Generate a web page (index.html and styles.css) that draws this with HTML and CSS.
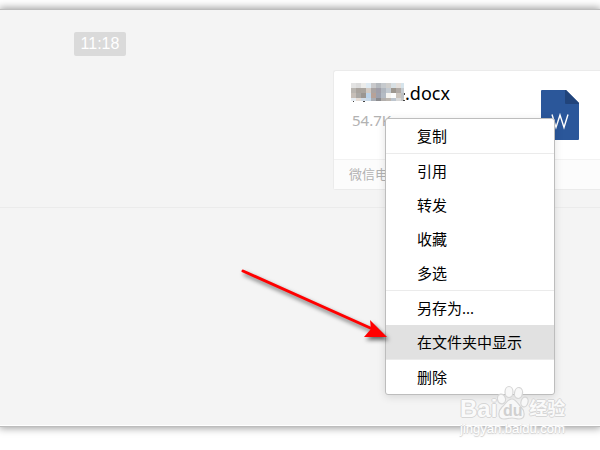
FILE: index.html
```
<!DOCTYPE html>
<html lang="zh-CN">
<head>
<meta charset="utf-8">
<title>聊天</title>
<link rel="stylesheet" href="styles.css">
</head>
<body>
<main class="window">
  <section class="messages">
    <time class="stamp">11:18</time>
    <article class="file-card">
      <div class="file-body">
        <div class="file-info">
          <h1 class="file-name">
            <svg class="mosaic" width="54" height="20" viewBox="0 0 54 20" shape-rendering="crispEdges" aria-hidden="true">
              <path fill="#e3e3e3" d="M0 0h5v5H0z"/><path fill="#dcdcdc" d="M5 0h5v5H5z"/><path fill="#ececea" d="M10 0h5v5h-5z"/><path fill="#dfeaf2" d="M15 0h5v5h-5z"/><path fill="#c9c9cb" d="M20 0h5v5h-5z"/><path fill="#b5b9be" d="M25 0h5v5h-5z"/><path fill="#c6cace" d="M30 0h5v5h-5z"/><path fill="#d0cfcd" d="M35 0h5v5h-5z"/><path fill="#d8e0e4" d="M40 0h5v5h-5z"/><path fill="#e4dfdb" d="M45 0h5v5h-5z"/><path fill="#d6e4ec" d="M50 0h3v5h-3z"/>
              <path fill="#b9b5b0" d="M0 5h5v5H0z"/><path fill="#a9a39d" d="M5 5h5v5H5z"/><path fill="#aaa59f" d="M10 5h5v5h-5z"/><path fill="#d3cbc4" d="M15 5h5v5h-5z"/><path fill="#aaa5a4" d="M20 5h5v5h-5z"/><path fill="#a09ea8" d="M25 5h5v5h-5z"/><path fill="#b1b7bf" d="M30 5h5v5h-5z"/><path fill="#c4cbd2" d="M35 5h5v5h-5z"/><path fill="#9d978f" d="M40 5h5v5h-5z"/><path fill="#b0aaa6" d="M45 5h5v5h-5z"/><path fill="#c5cbd0" d="M50 5h3v5h-3z"/>
              <path fill="#c6beb7" d="M0 10h5v5H0z"/><path fill="#aaa8a5" d="M5 10h5v5H5z"/><path fill="#9b9691" d="M10 10h5v5h-5z"/><path fill="#bbd3e9" d="M15 10h5v5h-5z"/><path fill="#b7a298" d="M20 10h5v5h-5z"/><path fill="#9da1ad" d="M25 10h5v5h-5z"/><path fill="#b4bbc4" d="M30 10h5v5h-5z"/><path fill="#f6f4f0" d="M35 10h5v5h-5z"/><path fill="#fcfcfc" d="M40 10h5v5h-5z"/><path fill="#cbc4bd" d="M45 10h5v5h-5z"/><path fill="#bdc1c4" d="M50 10h3v5h-3z"/>
              <path fill="#e7edf3" d="M0 15h5v3H0z"/><path fill="#e6ddd6" d="M5 15h5v3H5z"/><path fill="#d1dce8" d="M10 15h5v3h-5z"/><path fill="#c8d9e8" d="M15 15h5v3h-5z"/><path fill="#a9adb4" d="M20 15h5v3h-5z"/><path fill="#8b8b8e" d="M25 15h5v3h-5z"/><path fill="#b2afad" d="M30 15h5v3h-5z"/><path fill="#bcb6b0" d="M35 15h5v3h-5z"/><path fill="#bdc5ce" d="M40 15h5v3h-5z"/><path fill="#d9d9d9" d="M45 15h5v3h-5z"/><path fill="#c5c5c5" d="M50 15h3v3h-3z"/>
              <path fill="#444" d="M2 18h1v1H2zM12 18h2v1h-2zM53 10h1v2h-1zM52 17h2v1h-2z"/>
            </svg><span>.docx</span>
          </h1>
          <p class="file-size">54.7K</p>
        </div>
        <svg class="doc-icon" width="38" height="50" viewBox="0 0 38 50" role="img" aria-label="Word">
          <path fill="#2b579a" d="M1 0h24l13 13v36q0 1-1 1H1q-1 0-1-1V1q0-1 1-1z"/>
          <path fill="#21447b" d="M24 0h1l13 13v1H25q-1 0-1-1z"/>
          <path fill="none" stroke="#fff" stroke-width="1.4" d="M11 24.500l4 13 4-12.500 4 12.500 4-13"/>
        </svg>
      </div>
      <footer class="file-source">微信电脑版</footer>
    </article>
  </section>
  <section class="compose"></section>

  <div class="menu" role="menu">
    <button class="item" role="menuitem">复制</button>
    <hr class="rule">
    <button class="item" role="menuitem">引用</button>
    <button class="item" role="menuitem">转发</button>
    <button class="item" role="menuitem">收藏</button>
    <button class="item" role="menuitem">多选</button>
    <hr class="rule">
    <button class="item" role="menuitem">另存为...</button>
    <button class="item active" role="menuitem">在文件夹中显示</button>
    <hr class="rule">
    <button class="item" role="menuitem">删除</button>
  </div>

  <svg class="arrow" width="160" height="90" viewBox="0 0 160 90" aria-hidden="true">
    <path fill="none" stroke="red" stroke-width="3" stroke-linecap="round" d="M3 7l134 60"/>
    <path fill="red" d="M147 73l-17-17 1 9-7 8z"/>
  </svg>

  <div class="watermark">
    <div class="brand">
      <span class="latin">Bai</span>
      <svg class="paw" width="32" height="36" viewBox="0 0 32 36" aria-hidden="true">
        <g fill="#f8f8f8" stroke="#d6d6d6" stroke-width="1.2">
          <ellipse cx="4.500" cy="14" rx="4" ry="5" transform="rotate(-12 4.500 14)"/>
          <ellipse cx="12" cy="7" rx="4" ry="5.500"/>
          <ellipse cx="21.500" cy="8" rx="4" ry="5.500" transform="rotate(10 21.500 8)"/>
          <ellipse cx="27.500" cy="17" rx="3.500" ry="5" transform="rotate(15 27.500 17)"/>
          <path d="M15 14c4 0 6 5 9 8 4 4 5 12-2 12-3 0-4-1-7-1s-5 1-8 1c-7 0-6-8-2-12 4-3 5-8 10-8z"/>
        </g>
        <text class="du" x="6" y="31">du</text>
      </svg>
      <span class="han">经验</span>
    </div>
    <div class="address">jingyan.baidu.com</div>
  </div>
</main>
</body>
</html>
```
FILE: styles.css
```
* {
  box-sizing: border-box;
}

body {
  min-height: 100vh;
  margin: 0;
  padding-top: 9px;
  background: #fff;
  font-family: "Noto Sans", "Noto Sans CJK SC", sans-serif;
}

.window {
  position: relative;
  border-top: 1px solid #bdbdbd;
  border-bottom: 1px solid #bdbdbd;
  background: #f4f4f4;
  box-shadow: 0 0 8px 1px rgba(0, 0, 0, 0.4);
}

.messages {
  padding: 22px 0 17px;
  border-bottom: 1px solid #ebebeb;
}

.stamp {
  display: block;
  width: 52px;
  margin-left: 74px;
  border-radius: 2px;
  background: #dadada;
  color: #fff;
  font: 16px/24px "Liberation Sans", sans-serif;
  text-align: center;
}

.file-card {
  margin: 14px 0 0 333px;
  border: 1px solid #ebebeb;
  border-right: 0;
  border-radius: 3px 0 0 3px;
  background: #fff;
}

.file-body {
  display: flex;
  justify-content: space-between;
  height: 88px;
  padding: 11px 21px 0 17px;
}

.file-name {
  display: flex;
  align-items: center;
  margin: 0;
  color: #000;
  font-size: 18px;
  font-weight: 400;
  line-height: 22px;
}

.file-size {
  margin: 5px 0 0;
  padding-left: 1px;
  color: #b2b2b2;
  font-size: 15px;
  line-height: 22px;
}

.doc-icon {
  margin-top: 8px;
}

.file-source {
  padding-left: 15px;
  border-top: 1px solid #f2f2f2;
  background: #fcfcfc;
  color: #b2b2b2;
  font-size: 13px;
  line-height: 29px;
}

.compose {
  height: 218px;
  border-bottom: 1px solid #fff;
}

.menu {
  position: absolute;
  top: 108px;
  left: 385px;
  width: 170px;
  border: 1px solid #bdbdbd;
  border-radius: 3px;
  background: #fff;
  box-shadow: 0 2px 8px rgba(0, 0, 0, 0.12);
}

.item {
  display: block;
  width: 100%;
  padding: 0 0 0 31px;
  border: 0;
  background: none;
  color: #000;
  font: 15px/34px "Noto Sans", "Noto Sans CJK SC", sans-serif;
  text-align: left;
}

.item.active {
  background: #e1e1e1;
}

.rule {
  height: 1px;
  margin: 0;
  border: 0;
  background: #ebebeb;
}

.arrow {
  position: absolute;
  top: 254px;
  left: 240px;
  filter: drop-shadow(2px 3px 2px rgba(0, 0, 0, 0.6));
}

.watermark {
  position: absolute;
  top: 375px;
  left: 460px;
  color: #fafafa;
  font-family: "Liberation Sans", "Noto Sans CJK SC", sans-serif;
  text-shadow: 1px 0 #d6d6d6, -1px 0 #d6d6d6, 0 1px #d6d6d6, 0 -1px #d6d6d6;
}

.brand {
  display: flex;
  align-items: flex-end;
  height: 36px;
}

.latin,
.han {
  font-weight: 700;
  line-height: 24px;
}

.latin {
  font-size: 24px;
}

.han {
  font-size: 18px;
}

.du {
  fill: #d0d0d0;
  font-size: 16px;
  font-weight: 700;
  text-shadow: none;
}

.address {
  color: #fff;
  font-size: 13px;
  line-height: 16px;
  text-shadow: 0 1px 1px #ccc, 1px 0 1px #ddd;
}
```
